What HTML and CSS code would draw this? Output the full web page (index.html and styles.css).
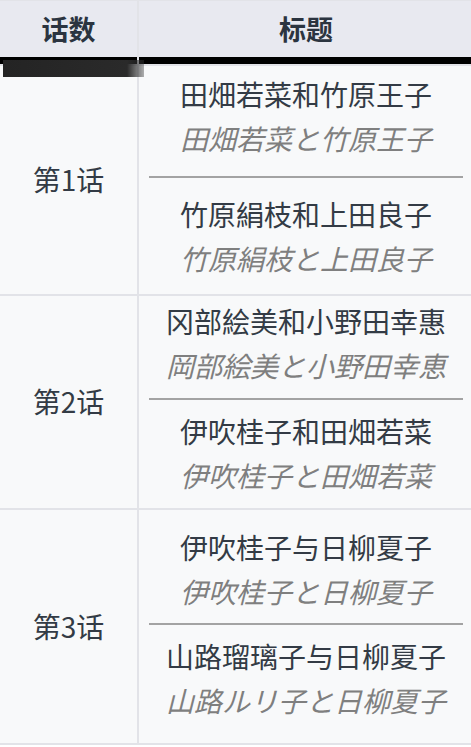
FILE: index.html
```html
<!DOCTYPE html>
<html lang="zh-CN">
<head>
<meta charset="utf-8">
<title>话数 标题</title>
<link rel="stylesheet" href="styles.css">
</head>
<body>
<div class="table">
  <div class="th">话数</div>
  <div class="th">标题</div>

  <div class="ep">第1话</div>
  <div class="titles r1">
    <div class="entry">
      <div class="zh">田畑若菜和竹原王子</div>
      <div class="ja" lang="ja">田畑若菜と竹原王子</div>
    </div>
    <hr class="sep sep1">
    <div class="entry">
      <div class="zh">竹原絹枝和上田良子</div>
      <div class="ja" lang="ja">竹原絹枝と上田良子</div>
    </div>
  </div>

  <div class="ep">第2话</div>
  <div class="titles r2">
    <div class="entry">
      <div class="zh">冈部絵美和小野田幸惠</div>
      <div class="ja" lang="ja">岡部絵美と小野田幸恵</div>
    </div>
    <hr class="sep sep2">
    <div class="entry">
      <div class="zh">伊吹桂子和田畑若菜</div>
      <div class="ja" lang="ja">伊吹桂子と田畑若菜</div>
    </div>
  </div>

  <div class="ep">第3话</div>
  <div class="titles r3">
    <div class="entry">
      <div class="zh">伊吹桂子与日柳夏子</div>
      <div class="ja" lang="ja">伊吹桂子と日柳夏子</div>
    </div>
    <hr class="sep sep3">
    <div class="entry">
      <div class="zh">山路瑠璃子与日柳夏子</div>
      <div class="ja" lang="ja">山路ルリ子と日柳夏子</div>
    </div>
  </div>
</div>
<div class="shadow-bar"></div>
</body>
</html>
```

FILE: styles.css
```css
html, body {
  margin: 0;
  padding: 0;
  background: #ffffff;
  overflow: hidden;
}

body {
  position: relative;
  font-family: "Noto Sans CJK SC", "Noto Sans", sans-serif;
}

.table {
  display: grid;
  grid-template-columns: 137px 1fr;
  column-gap: 2px;
  row-gap: 2px;
  width: 473px;
  padding-top: 1px;
  padding-bottom: 2px;
  background: #e2e3e8;
}

.th {
  height: 56px;
  display: flex;
  align-items: center;
  justify-content: center;
  background: #e8e9f0;
  border-bottom: 7px solid #000;
  font-size: 27px;
  font-weight: 700;
  color: #2b3440;
  padding-bottom: 2px;
  box-sizing: border-box;
  height: 63px;
}

.ep {
  display: flex;
  align-items: center;
  justify-content: center;
  background: #f8f9fa;
  font-size: 28px;
  color: #333b45;
  padding-bottom: 2px;
}

.titles {
  background: #f8f9fa;
  display: flex;
  flex-direction: column;
  padding: 0 10px;
  text-align: center;
}

.r1 { padding-top: 7px; padding-bottom: 13px; }
.r2 { padding-top: 4px; padding-bottom: 10px; }
.r3 { padding-top: 16px; padding-bottom: 20px; }

.zh {
  font-size: 28px;
  line-height: 43px;
  color: #333b45;
  white-space: nowrap;
}

.ja {
  font-family: "Noto Sans CJK JP", "Noto Sans", sans-serif;
  font-size: 28px;
  line-height: 45px;
  font-style: italic;
  color: #7f7f7f;
  white-space: nowrap;
}

.sep {
  border: 0;
  height: 2px;
  background: #a3a3a3;
  margin: 0;
}

.sep1 { margin-top: 15px; margin-bottom: 15px; }
.sep2 { margin-top: 10px; margin-bottom: 10px; }
.sep3 { margin-top: 9px; margin-bottom: 10px; }

.shadow-bar {
  position: absolute;
  left: 3px;
  top: 60px;
  width: 141px;
  height: 17px;
  background: linear-gradient(to right, #242424 0%, #2a2a2a 88%, rgba(60,60,60,0.4) 100%);
}
```
